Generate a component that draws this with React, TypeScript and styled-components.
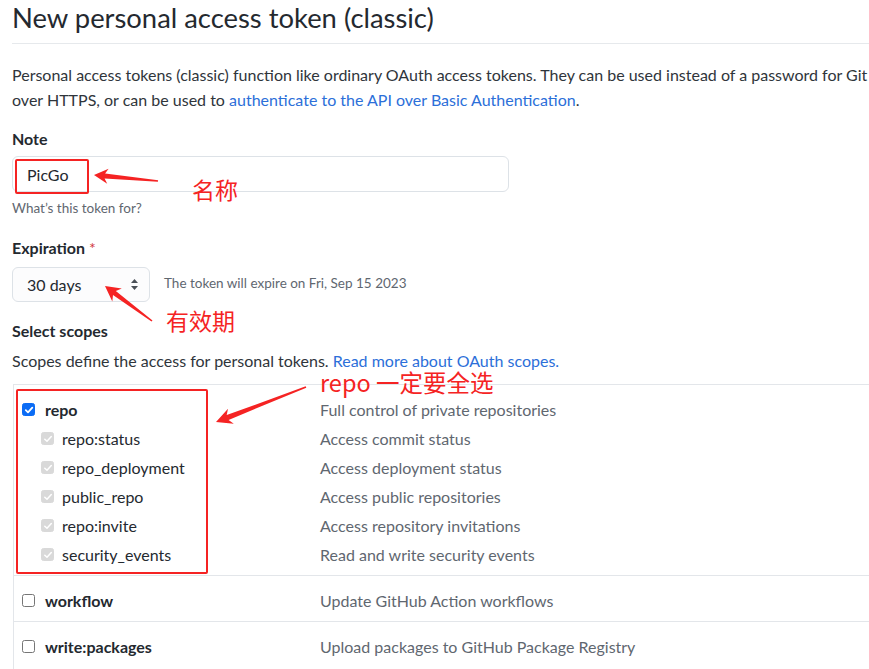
import React from "react";
import styled, { createGlobalStyle } from "styled-components";

const Global = createGlobalStyle`
  html, body {
    margin: 0;
    padding: 0;
    background: #ffffff;
    overflow: hidden;
  }
  body {
    width: 869px;
    height: 669px;
    font-family: Lato, "Noto Sans CJK SC", sans-serif;
    font-size: 16px;
    color: #24292f;
  }
`;

const Page = styled.div`
  position: relative;
  width: 869px;
  height: 669px;
  overflow: hidden;
  padding-left: 12px;
  box-sizing: border-box;
`;

const Header = styled.div`
  border-bottom: 1px solid #e6e9ec;
  padding-bottom: 7px;
`;

const Title = styled.h1`
  margin: 0;
  font-size: 27.4px;
  font-weight: 400;
  line-height: 36px;
  color: #24292f;
`;

const Lead = styled.p`
  margin: 18px 0 0;
  line-height: 25px;
  color: #2f353b;
`;

const Link = styled.a`
  color: #2c6fd9;
  text-decoration: none;
`;

const Label = styled.div<{ mt: number }>`
  margin-top: ${(p) => p.mt}px;
  font-weight: 700;
  line-height: 25px;
  color: #24292f;
`;

const Required = styled.span`
  color: #d1383d;
  font-weight: 400;
  margin-left: 4px;
`;

const TextInput = styled.div`
  margin-top: 5px;
  width: 497px;
  height: 36px;
  box-sizing: border-box;
  border: 1px solid #dde2e7;
  border-radius: 6px;
  display: flex;
  align-items: center;
  padding-left: 14px;
  color: #24292f;
`;

const Help = styled.div`
  margin-top: 6px;
  font-size: 13.5px;
  line-height: 20px;
  color: #5f6770;
`;

const ExpireRow = styled.div`
  margin-top: 7px;
  display: flex;
  align-items: center;
  gap: 14px;
`;

const Select = styled.div`
  width: 138px;
  height: 35px;
  box-sizing: border-box;
  border: 1px solid #dde2e7;
  border-radius: 6px;
  background: #fcfcfd;
  display: flex;
  align-items: center;
  justify-content: space-between;
  padding: 0 10px 0 14px;
  color: #24292f;
`;

const ExpireNote = styled.span`
  font-size: 13.5px;
  color: #5f6770;
  margin-top: -3px;
`;

const Desc = styled.p`
  margin: 5px 0 0;
  line-height: 25px;
  color: #2f353b;
`;

const ScopeTable = styled.div`
  margin-top: 11px;
  margin-left: 1px;
  width: 900px;
  border-top: 1px solid #e3e6ea;
  border-left: 1px solid #e3e6ea;
`;

const Group = styled.div`
  border-bottom: 1px solid #e3e6ea;
  padding: 10px 0 6px;
`;

const Row = styled.div`
  display: grid;
  grid-template-columns: 306px 1fr;
  height: 29px;
  align-items: center;
`;

const ScopeName = styled.div<{ sub?: boolean }>`
  display: flex;
  align-items: center;
  gap: ${(p) => (p.sub ? 8 : 10)}px;
  padding-left: ${(p) => (p.sub ? 27 : 8)}px;
  font-weight: ${(p) => (p.sub ? 400 : 700)};
  color: #24292f;
`;

const ScopeDesc = styled.div`
  color: #5f6770;
`;

const Box = styled.span<{ variant: "on" | "off" | "dis" | "disoff" }>`
  width: 13px;
  height: 13px;
  box-sizing: border-box;
  border-radius: 2.5px;
  display: inline-flex;
  align-items: center;
  justify-content: center;
  flex: none;
  background: ${(p) =>
    p.variant === "on" ? "#0b6cf5" : p.variant === "dis" ? "#d9d9d9" : "#ffffff"};
  border: ${(p) =>
    p.variant === "on"
      ? "1px solid #0b6cf5"
      : p.variant === "dis"
      ? "1px solid #d9d9d9"
      : p.variant === "disoff"
      ? "1px solid #c8c8c8"
      : "1px solid #767676"};
`;

const Overlay = styled.svg`
  position: absolute;
  left: 0;
  top: 0;
  width: 869px;
  height: 669px;
  pointer-events: none;
`;

const RedBox = styled.div`
  position: absolute;
  border: 2px solid #f52323;
  border-radius: 2px;
  box-sizing: border-box;
  pointer-events: none;
`;

const Note = styled.div`
  position: absolute;
  font-family: "Noto Sans CJK SC", sans-serif;
  color: #f52323;
  white-space: nowrap;
  line-height: 1;
`;

function Check({ variant }: { variant: "on" | "off" | "dis" | "disoff" }) {
  return (
    <Box variant={variant}>
      {(variant === "on" || variant === "dis") && (
        <svg width="10" height="10" viewBox="0 0 10 10">
          <path
            d="M1.8 5.2 L4 7.3 L8.3 2.6"
            fill="none"
            stroke="#ffffff"
            strokeWidth={variant === "on" ? 1.8 : 1.5}
            strokeLinecap="round"
            strokeLinejoin="round"
          />
        </svg>
      )}
    </Box>
  );
}

function arrow(
  tip: [number, number],
  tail: [number, number],
  headLen: number,
  headHalf: number,
  near: number,
  far: number
) {
  const dx = tail[0] - tip[0];
  const dy = tail[1] - tip[1];
  const len = Math.hypot(dx, dy);
  const ux = dx / len;
  const uy = dy / len;
  const px = -uy;
  const py = ux;
  const bx = tip[0] + ux * headLen;
  const by = tip[1] + uy * headLen;
  const nx = tip[0] + ux * headLen * 0.78;
  const ny = tip[1] + uy * headLen * 0.78;
  const pts: [number, number][] = [
    tip,
    [bx + px * headHalf, by + py * headHalf],
    [nx + px * near, ny + py * near],
    [tail[0] + px * far, tail[1] + py * far],
    [tail[0] - px * far, tail[1] - py * far],
    [nx - px * near, ny - py * near],
    [bx - px * headHalf, by - py * headHalf],
  ];
  return pts.map((p) => p[0].toFixed(1) + "," + p[1].toFixed(1)).join(" ");
}

type Scope = { name: string; desc: string; sub?: boolean; state: "on" | "off" | "dis" | "disoff" };

const groups: Scope[][] = [
  [
    { name: "repo", desc: "Full control of private repositories", state: "on" },
    { name: "repo:status", desc: "Access commit status", sub: true, state: "dis" },
    { name: "repo_deployment", desc: "Access deployment status", sub: true, state: "dis" },
    { name: "public_repo", desc: "Access public repositories", sub: true, state: "dis" },
    { name: "repo:invite", desc: "Access repository invitations", sub: true, state: "dis" },
    { name: "security_events", desc: "Read and write security events", sub: true, state: "dis" },
  ],
  [{ name: "workflow", desc: "Update GitHub Action workflows", state: "off" }],
  [
    { name: "write:packages", desc: "Upload packages to GitHub Package Registry", state: "off" },
    { name: "read:packages", desc: "Download packages from GitHub Package Registry", sub: true, state: "off" },
  ],
];

export default function App() {
  return (
    <>
      <Global />
      <Page>
        <Header>
          <Title>New personal access token (classic)</Title>
        </Header>
        <Lead>
          Personal access tokens (classic) function like ordinary OAuth access tokens. They can be used instead of a
          password for Git over HTTPS, or can be used to{" "}
          <Link href="#">authenticate to the API over Basic Authentication</Link>.
        </Lead>

        <Label mt={14}>Note</Label>
        <TextInput>PicGo</TextInput>
        <Help>What’s this token for?</Help>

        <Label mt={17}>
          Expiration<Required>*</Required>
        </Label>
        <ExpireRow>
          <Select>
            <span>30 days</span>
            <svg width="9" height="13" viewBox="0 0 9 13">
              <path d="M4.5 1 L8 5 H1 Z" fill="#4a5057" />
              <path d="M4.5 12 L8 8 H1 Z" fill="#4a5057" />
            </svg>
          </Select>
          <ExpireNote>The token will expire on Fri, Sep 15 2023</ExpireNote>
        </ExpireRow>

        <Label mt={16}>Select scopes</Label>
        <Desc>
          Scopes define the access for personal tokens. <Link href="#">Read more about OAuth scopes.</Link>
        </Desc>

        <ScopeTable>
          {groups.map((g, gi) => (
            <Group key={gi}>
              {g.map((s) => (
                <Row key={s.name}>
                  <ScopeName sub={s.sub}>
                    <Check variant={s.state} />
                    <span>{s.name}</span>
                  </ScopeName>
                  <ScopeDesc>{s.desc}</ScopeDesc>
                </Row>
              ))}
            </Group>
          ))}
        </ScopeTable>

        <RedBox style={{ left: 15, top: 159, width: 74, height: 35 }} />
        <RedBox style={{ left: 16, top: 389, width: 192, height: 185 }} />
        <Overlay viewBox="0 0 869 669">
          <polygon points={arrow([94, 175], [158, 181], 14, 7.5, 2.4, 0.8)} fill="#f52323" />
          <polygon points={arrow([105, 286], [152, 321], 15, 8, 2.4, 0.8)} fill="#f52323" />
          <polygon points={arrow([216, 422], [306, 387], 16, 8, 2.6, 0.8)} fill="#f52323" />
        </Overlay>
        <Note style={{ left: 192, top: 178, fontSize: 23 }}>名称</Note>
        <Note style={{ left: 166, top: 309, fontSize: 23 }}>有效期</Note>
        <Note style={{ left: 320, top: 371, fontSize: 23.5 }}>repo 一定要全选</Note>
      </Page>
    </>
  );
}
